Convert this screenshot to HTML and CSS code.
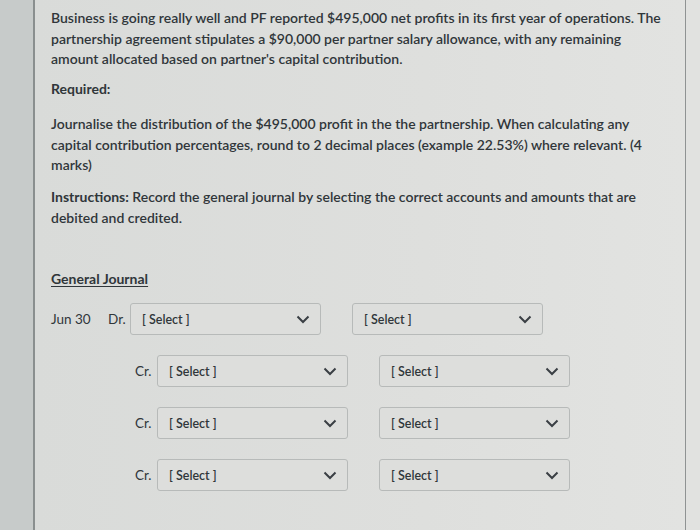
FILE: index.html
```html
<!DOCTYPE html>
<html>
<head>
<meta charset="utf-8">
<link rel="stylesheet" href="styles.css">
</head>
<body>
<div class="page">
  <div class="side"></div>
  <div class="main">
    <p class="para p1">Business is going really well and PF reported $495,000 net profits in its first year of operations. The partnership agreement stipulates a $90,000 per partner salary allowance, with any remaining amount allocated based on partner's capital contribution.</p>
    <p class="para req">Required:</p>
    <p class="para p2">Journalise the distribution of the $495,000 profit in the the partnership. When calculating any capital contribution percentages, round to 2 decimal places (example 22.53%) where relevant. (4 marks)</p>
    <p class="para p3"><strong>Instructions:</strong> Record the general journal by selecting the correct accounts and amounts that are debited and credited.</p>
    <h3 class="gj">General Journal</h3>
    <div class="journal">
      <div class="row">
        <span class="date">Jun 30</span>
        <span class="dc">Dr.</span>
        <div class="sel"><span>[ Select ]</span><svg class="chev" viewBox="0 0 14 9"><path d="M1.5 1.5 L7 7 L12.5 1.5" fill="none" stroke="#3a3f44" stroke-width="2"/></svg></div>
        <div class="sel sel2"><span>[ Select ]</span><svg class="chev" viewBox="0 0 14 9"><path d="M1.5 1.5 L7 7 L12.5 1.5" fill="none" stroke="#3a3f44" stroke-width="2"/></svg></div>
      </div>
      <div class="row cr">
        <span class="dc">Cr.</span>
        <div class="sel"><span>[ Select ]</span><svg class="chev" viewBox="0 0 14 9"><path d="M1.5 1.5 L7 7 L12.5 1.5" fill="none" stroke="#3a3f44" stroke-width="2"/></svg></div>
        <div class="sel sel2"><span>[ Select ]</span><svg class="chev" viewBox="0 0 14 9"><path d="M1.5 1.5 L7 7 L12.5 1.5" fill="none" stroke="#3a3f44" stroke-width="2"/></svg></div>
      </div>
      <div class="row cr">
        <span class="dc">Cr.</span>
        <div class="sel"><span>[ Select ]</span><svg class="chev" viewBox="0 0 14 9"><path d="M1.5 1.5 L7 7 L12.5 1.5" fill="none" stroke="#3a3f44" stroke-width="2"/></svg></div>
        <div class="sel sel2"><span>[ Select ]</span><svg class="chev" viewBox="0 0 14 9"><path d="M1.5 1.5 L7 7 L12.5 1.5" fill="none" stroke="#3a3f44" stroke-width="2"/></svg></div>
      </div>
      <div class="row cr">
        <span class="dc">Cr.</span>
        <div class="sel"><span>[ Select ]</span><svg class="chev" viewBox="0 0 14 9"><path d="M1.5 1.5 L7 7 L12.5 1.5" fill="none" stroke="#3a3f44" stroke-width="2"/></svg></div>
        <div class="sel sel2"><span>[ Select ]</span><svg class="chev" viewBox="0 0 14 9"><path d="M1.5 1.5 L7 7 L12.5 1.5" fill="none" stroke="#3a3f44" stroke-width="2"/></svg></div>
      </div>
    </div>
  </div>
  <div class="rside"></div>
</div>
</body>
</html>
```

FILE: styles.css
```css
html, body {
  margin: 0;
  padding: 0;
}
body {
  width: 700px;
  height: 530px;
  overflow: hidden;
  background: #dadcda;
  font-family: Lato, "Open Sans", sans-serif;
  color: #30363a;
}
.page {
  display: flex;
  height: 530px;
}
.side {
  width: 33px;
  flex: none;
  background: #c7cbca;
  border-right: 2px solid #8a8f8f;
}
.main {
  width: 634px;
  flex: none;
  padding: 8px 0 0 16px;
  background: linear-gradient(90deg, #d9dbd9 0%, #dedfdd 60%, #e2e3e1 100%);
  border-right: 1px solid #8f9393;
}
.rside {
  flex: 1;
  background: #e1e2e0;
}
.para {
  margin: 0;
  max-width: 612px;
  font-size: 14px;
  line-height: 20.5px;
  font-weight: 600;
}
.req {
  margin-top: 9.5px;
  font-weight: 700;
}
.p2 {
  margin-top: 14.5px;
}
.p3 {
  margin-top: 11.5px;
}
.para strong {
  font-weight: 700;
}
.gj {
  margin: 41px 0 0 0;
  font-size: 14px;
  font-weight: 700;
  text-decoration: underline;
  text-underline-offset: 2px;
  line-height: 20px;
}
.journal {
  display: flex;
  flex-direction: column;
  gap: 20px;
  margin-top: 14px;
}
.row {
  display: flex;
  align-items: center;
  height: 32px;
}
.date {
  font-size: 13.5px;
  width: 57px;
}
.dc {
  font-size: 13.5px;
  width: 22px;
}
.cr {
  padding-left: 84px;
}
.sel {
  width: 191px;
  height: 32px;
  border: 1px solid #b7bab9;
  border-radius: 3px;
  background: #dddedc;
  display: flex;
  align-items: center;
  justify-content: space-between;
  padding: 0 10px 0 11px;
  box-sizing: border-box;
  font-size: 12.5px;
  font-weight: 600;
}
.sel2 {
  margin-left: 31px;
}
.chev {
  width: 14px;
  height: 9px;
}
```
